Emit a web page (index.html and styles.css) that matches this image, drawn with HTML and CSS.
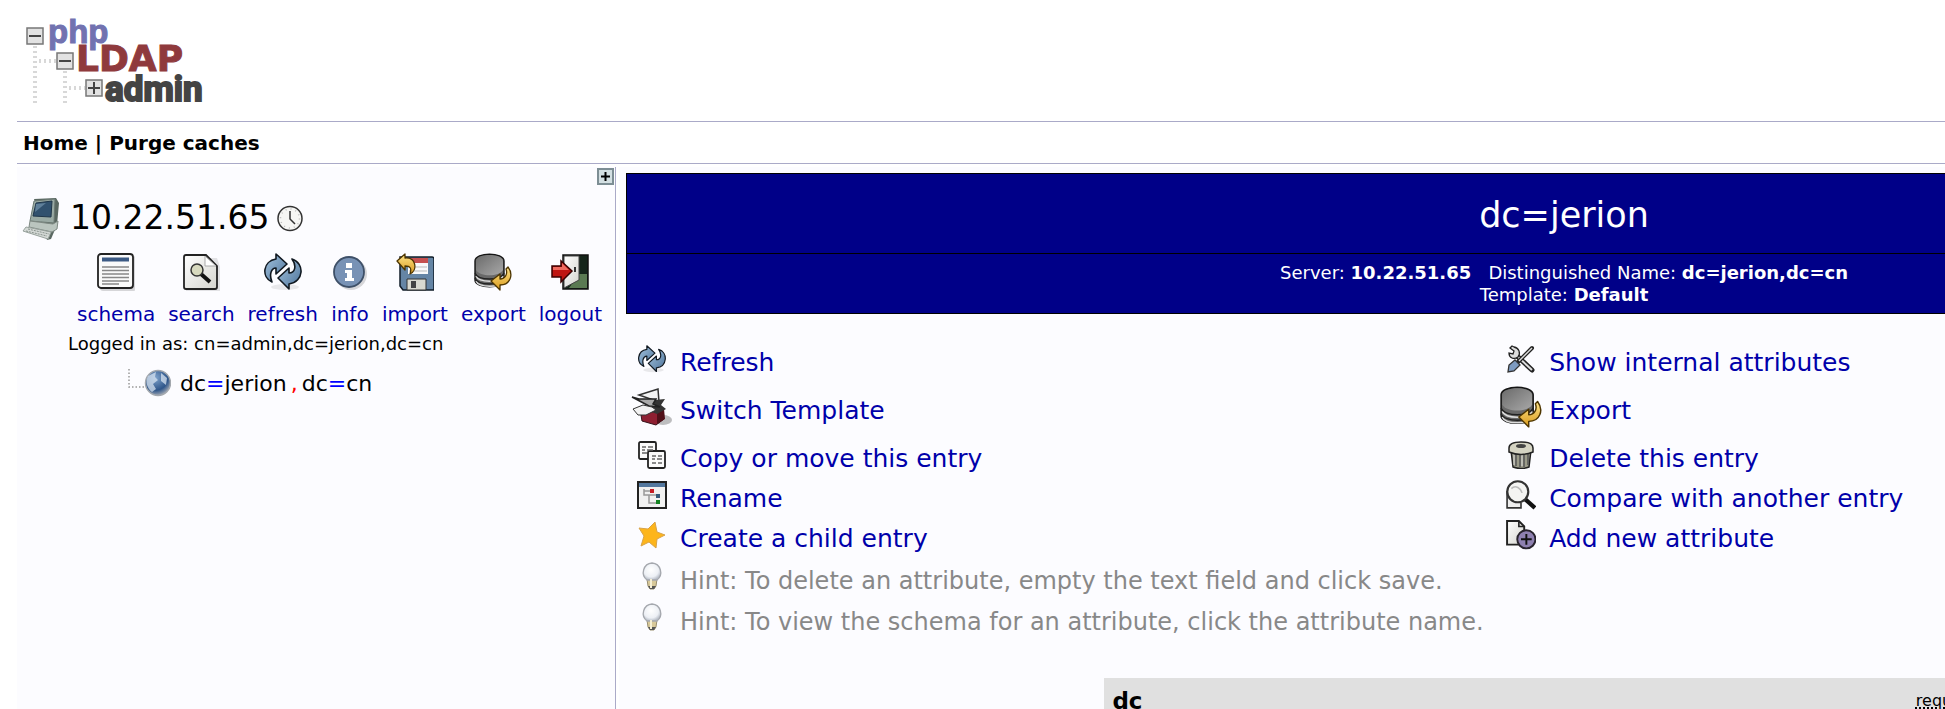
FILE: index.html
```html
<!DOCTYPE html>
<html lang="en">
<head>
<meta charset="utf-8">
<title>phpLDAPadmin</title>
<link rel="stylesheet" href="styles.css">
</head>
<body>
<svg class="defs" width="0" height="0" aria-hidden="true">
  <defs>
    <linearGradient id="gBlue" x1="0" y1="0" x2="1" y2="1"><stop offset="0" stop-color="#a5c4df"/><stop offset="1" stop-color="#4b7299"/></linearGradient>
    <linearGradient id="gGold" x1="0" y1="0" x2="0" y2="1"><stop offset="0" stop-color="#ffe58a"/><stop offset="1" stop-color="#d99a1c"/></linearGradient>
    <linearGradient id="gDisk" x1="0" y1="0" x2="1" y2="1"><stop offset="0" stop-color="#6b6b6b"/><stop offset="1" stop-color="#a8a8a8"/></linearGradient>
    <linearGradient id="gPaper" x1="0" y1="0" x2="1" y2="1"><stop offset="0" stop-color="#ffffff"/><stop offset="1" stop-color="#d4d4ce"/></linearGradient>
    <radialGradient id="gGlobe" cx="0.4" cy="0.3" r="0.7"><stop offset="0" stop-color="#7fa3cc"/><stop offset="0.7" stop-color="#2f568a"/><stop offset="1" stop-color="#9aa3b0"/></radialGradient>
    <radialGradient id="gBulb" cx="0.45" cy="0.4" r="0.6"><stop offset="0" stop-color="#ffffff"/><stop offset="0.7" stop-color="#edf0f5"/><stop offset="1" stop-color="#b9bfc9"/></radialGradient>
    <symbol id="refresh" viewBox="0 0 38 38">
      <ellipse cx="21" cy="34" rx="14" ry="3" fill="#000" opacity=".08"/>
      <path d="M8 29C-3 24-1 8 12 6V1l11 10-11 10v-6c-5 0-7 7-4 14z" fill="url(#gBlue)" stroke="#101820" stroke-width="1.6" stroke-linejoin="round"/>
      <path d="M28 6c13 4 12 23-3 25v5L14 25l11-10v5c6 0 8-7 3-14z" fill="url(#gBlue)" stroke="#101820" stroke-width="1.6" stroke-linejoin="round"/>
    </symbol>
    <symbol id="export" viewBox="0 0 38 38">
      <path d="M1 8C1 -1 30 -1 30 8V27C30 36 1 36 1 27Z" fill="#696969" stroke="#151515" stroke-width="1.4"/>
      <path d="M2 23c3 7 25 7 27 0M2 28c3 7 25 7 27 0" fill="none" stroke="#ddd" stroke-width="1.4"/>
      <path d="M1 20c3 8 26 8 29 0M1 25c3 8 26 8 29 0" fill="none" stroke="#222" stroke-width="1.3"/>
      <path d="M2 8C3 0 28 0 29 8v9c-4 7-23 7-27 0z" fill="url(#gDisk)"/>
      <path d="M34 14c6 8 2 18-8 18v5L17 28l9-7v5c5 0 8-5 6-10z" fill="url(#gGold)" stroke="#4d3500" stroke-width="1.3" stroke-linejoin="round"/>
    </symbol>
    <symbol id="bulb" viewBox="0 0 28 28">
      <path d="M9 17h10l-1 7-2 3h-4l-2-3z" fill="#d8c99a" stroke="#998f70"/>
      <path d="M10 24h8l-2 3h-4z" fill="#555"/>
      <path d="M14 1a9.500 9.500 0 0 0-5 17h10A9.500 9.500 0 0 0 14 1z" fill="url(#gBulb)" stroke="#a5a8ae" stroke-width="1.300"/>
      <path d="M13 17v9" stroke="#f5efd5" stroke-width="2"/>
    </symbol>
  </defs>
</svg>

<div class="page">
  <header class="masthead">
    <svg class="logo" width="186" height="88" viewBox="0 0 186 88" role="img" aria-label="phpLDAPadmin">
      <g stroke="#d8d8d8" stroke-width="4" stroke-dasharray="2 3" fill="none"><path d="M10 29V87M40 54V87"/><path d="M14 44H31M44 71H60"/></g>
      <g fill="#e2e2e2" stroke="#777" stroke-width="1.5"><rect x="2" y="11" width="16" height="16"/><rect x="32" y="36" width="16" height="16"/><rect x="61" y="63" width="16" height="16"/></g>
      <path d="M4 19H16M34 44H46M63 71H75M69 65V77" stroke="#444" stroke-width="2"/>
      <text class="logo-php" x="23" y="26">php</text>
      <text class="logo-ldap" x="51" y="54">LDAP</text>
      <text class="logo-admin" x="80" y="84">admin</text>
    </svg>
  </header>
  <nav class="menu"><a href="#">Home</a> | <a href="#">Purge caches</a></nav>

  <div class="columns">
    <aside class="tree">
      <button class="expand" aria-label="Expand panel"><svg width="17" height="17" viewBox="0 0 17 17"><path d="M1 0V17M0 1H17" stroke="#7d8e94" stroke-width="2"/><path d="M16 0V17M0 16H17" stroke="#7d8e94" stroke-width="2"/><path d="M8.500 4v9M4 8.500h9" stroke="#000" stroke-width="2"/></svg></button>
      <div class="server">
        <svg width="40" height="44" viewBox="0 0 40 44" aria-hidden="true">
          <path d="M12 3L34 2l3 5-2 22-6 14-4 1z" fill="#596761"/>
          <path d="M12 5L33 3 32 27 8 25z" fill="#9aaaa4" stroke="#6a7872"/>
          <path d="M14 7L30 5 29 21 11 20z" fill="#31516e" stroke="#20364a"/>
          <path d="M14 8l10-1-11 9z" fill="#60809a"/>
          <path d="M8 25l23 3 5-3-1 8-5 3-23-5z" fill="#bac5bf" stroke="#7e8983"/>
          <path d="M4 31l25 5-3 7L1 35z" fill="#d4d9d6" stroke="#98a29d"/>
          <path d="M6 33l21 5M4 35l21 5" stroke="#8a948f" stroke-dasharray="2 1"/>
        </svg>
        <h1 class="server-name">10.22.51.65</h1>
        <svg width="26" height="27" viewBox="0 0 26 27" aria-hidden="true"><circle cx="13" cy="13.500" r="12" fill="#f6f6f4" stroke="#333" stroke-width="1.500"/><circle cx="13" cy="13.500" r="9.500" fill="none" stroke="#bbb" stroke-width="1.500" stroke-dasharray="1 4"/><path d="M13 6v8l5 5" fill="none" stroke="#333" stroke-width="1.500"/></svg>
      </div>
      <ul class="tools">
        <li><a href="#"><svg width="38" height="38" viewBox="0 0 38 38"><rect x="3" y="3" width="36" height="35" rx="3" fill="#000" opacity=".15"/><rect x="1" y="1" width="35" height="34" rx="3" fill="#fafafa" stroke="#222" stroke-width="1.800"/><path d="M5 6.500H32" stroke="#3c5a84" stroke-width="4"/><path d="M5 14H32M5 17.500H32M5 21H32M5 24.500H32M5 28H32M5 31H22" stroke="#888" stroke-width="1.400"/></svg>schema</a></li>
        <li><a href="#"><svg width="38" height="38" viewBox="0 0 38 38"><path d="M4 5h31l3 9v24H4z" fill="#000" opacity=".1"/><path d="M4 2h20l11 11v21q0 2-2 2H4q-2 0-2-2V4q0-2 2-2z" fill="url(#gPaper)" stroke="#222" stroke-width="1.800"/><path d="M23 3v10h11z" fill="#fff" stroke="#aaa"/><path d="M19 21l9 8" stroke="#111" stroke-width="4"/><circle cx="15" cy="17" r="6" fill="#d7d9be" stroke="#333" stroke-width="1.500"/></svg>search</a></li>
        <li><a href="#"><svg width="38" height="38"><use href="#refresh"/></svg>refresh</a></li>
        <li><a href="#"><svg width="38" height="38" viewBox="0 0 38 38"><circle cx="20" cy="21" r="16" fill="#000" opacity=".15"/><circle cx="18" cy="19" r="15" fill="#7892b5" stroke="#3e5068" stroke-width="1.800"/><path d="M15 10h6v5h-6zM14 17h7v8h2v3h-9v-3h2v-5h-2z" fill="#fff"/></svg>info</a></li>
        <li><a href="#"><svg width="38" height="38" viewBox="0 0 38 38"><path d="M4 4h32q2 0 2 2v31H7l-3-4z" fill="#6585a5" stroke="#111c28" stroke-width="1.500"/><path d="M12 5h20v16H12z" fill="#fafafa"/><path d="M12 5h20v5H12z" fill="#c65050"/><path d="M13 14H31M13 18H31" stroke="#bbb"/><path d="M11 26h19v11H11z" fill="#d9d9d0" stroke="#333"/><path d="M15 28h5v7h-5z" fill="#444"/><path d="M1 8l8-7v4c11-1 13 12 5 16 2-6 0-8-5-8v4z" fill="url(#gGold)" stroke="#4d3500" stroke-width="1.300" stroke-linejoin="round"/></svg>import</a></li>
        <li><a href="#"><svg width="38" height="38"><use href="#export"/></svg>export</a></li>
        <li><a href="#"><svg width="38" height="38" viewBox="0 0 38 38"><path d="M12 2h25v34H12z" fill="#15251a" stroke="#111" stroke-width="1.500"/><path d="M28 21h8v14H18z" fill="#5a7a52"/><path d="M13 3h15v24l-15 8z" fill="url(#gPaper)" stroke="#444"/><path d="M24 14v5" stroke="#333" stroke-width="2"/><path d="M1 13h9V8l11 10-11 11v-5H1z" fill="#bf1511" stroke="#3b0000" stroke-width="1.500"/><path d="M2 14h9v-4l7 7H2z" fill="#ef6a5f"/></svg>logout</a></li>
      </ul>
      <p class="login">Logged in as: cn=admin,dc=jerion,dc=cn</p>
      <a class="node" href="#">
        <svg width="44" height="30" viewBox="0 0 44 30" aria-hidden="true"><path d="M2 0V18H17" fill="none" stroke="#999" stroke-width="1.500" stroke-dasharray="1.500 2"/><circle cx="31" cy="14" r="12.500" fill="url(#gGlobe)" stroke="#a3a8ae" stroke-width="1.500"/><path d="M21 7l8-4-1 5 3 3-5 4 3 5-4 3c-5-4-7-10-4-16zM34 4l6 5-1 7-5-4z" fill="#d7e3f0" opacity=".75"/></svg>
        <span>dc<b>=</b>jerion<i>,</i>dc<b>=</b>cn</span>
      </a>
    </aside>

    <main class="content">
      <div class="banner">
        <h2 class="title">dc=jerion</h2>
        <p class="subtitle">Server: <strong>10.22.51.65</strong> &nbsp; Distinguished Name: <strong>dc=jerion,dc=cn</strong><br>Template: <strong>Default</strong></p>
      </div>
      <div class="actions">
        <a class="action" href="#"><svg width="28" height="28"><use href="#refresh"/></svg><span>Refresh</span></a>
        <a class="action" href="#"><svg width="28" height="28" viewBox="0 0 28 28"><path d="M10 11L25 25" stroke="#222" stroke-width="5" stroke-linecap="round"/><path d="M10 11L25 25" stroke="#ddd" stroke-width="2"/><path d="M3 3l4 3-1 3-4-1c0 5 5 7 9 4 3-4 1-9-4-10l-2-1z" fill="#ddd" stroke="#222" stroke-width="1.300"/><path d="M11 17L25 3" stroke="#222" stroke-width="4" stroke-linecap="round"/><path d="M12 16L25 3" stroke="#ddd" stroke-width="1.500"/><path d="M8 15l5 5-6 6-6 1 1-7z" fill="#7e9bc0" stroke="#333" stroke-width="1.300"/></svg><span>Show internal attributes</span></a>
        <a class="action tall" href="#"><svg width="42" height="38" viewBox="0 0 42 38"><ellipse cx="32" cy="32" rx="9" ry="5" fill="#000" opacity=".25"/><path d="M10 27l21-6 2 10-8 6-14-4z" fill="#8e1f31" stroke="#35121a"/><path d="M26 25l7-4 1 10-8 5z" fill="#501019"/><path d="M8 7L27 1l1 13z" fill="#f4f4f4" stroke="#333" stroke-width="1.500"/><path d="M24 12l10-1-4 6 5 4-9 5-8-3z" fill="#343434"/><path d="M1 9l7 2h17l-3 5 7 3-11-1z" fill="#aaa" stroke="#222" stroke-width="1.500"/><path d="M2 21l10-4 9 2 4 3-10 5H7z" fill="#f2f2f2" stroke="#333"/></svg><span>Switch Template</span></a>
        <a class="action tall" href="#"><svg width="42" height="42"><use href="#export"/></svg><span>Export</span></a>
        <a class="action" href="#"><svg width="28" height="28" viewBox="0 0 28 28"><g fill="#fafafa" stroke="#222" stroke-width="1.800"><rect x="1" y="1" width="17" height="17" rx="1.500"/><rect x="10" y="10" width="17" height="17" rx="1.500"/></g><path d="M4 6h4m2 0h5M4 9h3m2 0h6M4 12h5M14 15h4m2 0h4M14 18h3m2 0h5M14 22h4m2 0h4" stroke="#666" stroke-width="1.500"/></svg><span>Copy or move this entry</span></a>
        <a class="action" href="#"><svg width="28" height="28" viewBox="0 0 28 28"><path d="M4 9h20l-2 17q-8 3-16 0z" fill="#9b9b89" stroke="#222" stroke-width="1.500"/><path d="M9 13v12M13 13v13M17 13v13M21 13v11" stroke="#555" stroke-width="1.500"/><path d="M7 13v11M15 13v12" stroke="#ddd"/><path d="M2 7q0-6 12-6t12 6v4q-12 5-24 0z" fill="#d4d3c2" stroke="#222" stroke-width="1.500"/><ellipse cx="14" cy="5" rx="5" ry="2" fill="#444"/></svg><span>Delete this entry</span></a>
        <a class="action" href="#"><svg width="30" height="28" viewBox="0 0 30 28"><rect x="1" y="1" width="28" height="26" fill="#f1f1f1" stroke="#222" stroke-width="2"/><path d="M2 4h26" stroke="#54789f" stroke-width="4"/><path d="M7 8v6h13M12 14v8h7M7 10h6" fill="none" stroke="#999" stroke-width="1.500"/><path d="M13 8h4v4h-4z" fill="#c51d25"/><path d="M19 13h4v4h-4z" fill="#34587a"/><path d="M19 19h4v4h-4z" fill="#148322"/></svg><span>Rename</span></a>
        <a class="action" href="#"><svg width="30" height="30" viewBox="0 0 28 28"><path d="M1 10v16h13v-5" fill="#eee" stroke="#333" stroke-width="1.500"/><path d="M18 18l9 8" stroke="#111" stroke-width="4"/><circle cx="11" cy="11" r="9.800" fill="#f4f4f2" stroke="#333" stroke-width="2"/><path d="M5 8c4-4 9 0 10 4" fill="none" stroke="#bbb" stroke-width="1.500"/></svg><span>Compare with another entry</span></a>
        <a class="action" href="#"><svg width="28" height="28" viewBox="0 0 28 28"><path d="M17 1l2 10 8 3-8 4-1 9-7-6-8 4 3-10-5-8 9 1z" fill="#fdb51b" stroke="#d9a348"/></svg><span>Create a child entry</span></a>
        <a class="action" href="#"><svg width="30" height="30" viewBox="0 0 28 28"><path d="M1 1h11l5 5v17H1z" fill="url(#gPaper)" stroke="#222" stroke-width="1.800"/><path d="M12 1v5h5" fill="none" stroke="#222" stroke-width="1.500"/><circle cx="19" cy="18" r="8.500" fill="#8e80b0" stroke="#28232d" stroke-width="1.800"/><path d="M14 18h10M19 13v10" stroke="#111" stroke-width="1.800"/></svg><span>Add new attribute</span></a>
        <p class="action hint"><svg width="28" height="28"><use href="#bulb"/></svg><span>Hint: To delete an attribute, empty the text field and click save.</span></p>
        <p class="action hint"><svg width="28" height="28"><use href="#bulb"/></svg><span>Hint: To view the schema for an attribute, click the attribute name.</span></p>
      </div>
      <section class="attribute">
        <h3 class="attribute-name">dc</h3>
        <span class="notes"><abbr>required</abbr>, <abbr>rdn</abbr></span>
      </section>
    </main>
  </div>
</div>
</body>
</html>
```
FILE: styles.css
```css
* { box-sizing: border-box; }
html { height: 100%; overflow: hidden; background: #fff; }
body { margin: 0; min-height: 100%; font-family: Verdana, "DejaVu Sans", sans-serif; font-size: 20px; color: #000; }
h1, h2, h3, p, ul { margin: 0; padding: 0; font-weight: normal; }
a { color: #0000aa; text-decoration: none; }
svg { display: block; flex: none; }
.defs { position: absolute; }

.page { display: flex; flex-direction: column; width: 129vw; min-height: 100vh; padding-left: 17px; }
.masthead { padding: 17px 8px 16px; }
.logo text { font-weight: bold; }
.logo-php { font-family: "Liberation Sans", sans-serif; font-size: 33px; fill: #7272b0; stroke: #7272b0; }
.logo-ldap { font-family: "DejaVu Sans", sans-serif; font-size: 36px; fill: #8f3a3d; stroke: #8f3a3d; }
.logo-admin { font-family: Roboto, "Liberation Sans", sans-serif; font-size: 35px; fill: #444; stroke: #444; stroke-width: 2px; }

.menu { border: 1px solid #aaaac8; border-width: 1px 0; padding: 2px 6px 0; line-height: 39px; font-weight: bold; }
.menu a { color: #000; }

.columns { display: flex; flex: 1; margin-top: 3px; }
.tree { flex: none; width: 599px; background: #fcfcff; border-right: 1px solid #aaaac8; }
.expand { display: block; margin: 1px 1px 0 auto; padding: 0; border: 0; background: #d3dfe2; }
.server { display: flex; align-items: center; gap: 8px; padding: 11px 5px 0; }
.server-name { font-size: 33px; line-height: 44px; }
.tools { display: flex; gap: 13px; padding: 13px 0 0 60px; list-style: none; }
.tools a { display: flex; flex-direction: column; align-items: center; gap: 11px; line-height: 24px; }
.login { padding: 6px 0 0 51px; font-size: 18px; line-height: 24px; }
.node { display: flex; align-items: center; gap: 9px; padding: 13px 0 0 110px; font-size: 22px; line-height: 30px; color: #000; }
.node b { font-weight: normal; color: #00f; }
.node i { padding: 0 4px; font-style: normal; color: #f00; }

.content { flex: 1; margin-left: 3px; padding: 6px 7px 0; background: #fcfcff; }
.banner { background: #000088; border: 1px solid #000; color: #fff; text-align: center; }
.title { padding-top: 4px; font-size: 35px; line-height: 75px; border-bottom: 1px solid #000; }
.subtitle { padding: 8px 0 7px; font-size: 18px; line-height: 22px; }

.actions { display: grid; grid-template-columns: 871fr 1005fr; padding: 25px 0 0 4px; font-size: 25px; }
.action { display: grid; grid-template-columns: 44px 1fr; column-gap: 6px; align-items: center; justify-items: center; min-height: 40px; line-height: 28px; }
.action span { justify-self: start; padding-top: 8px; }
.tall { min-height: 56px; }
.hint { grid-column: 1 / -1; min-height: 41px; font-size: 24px; color: #888; }
.hint span { padding-top: 10px; }

.attribute { display: flex; justify-content: space-between; align-items: center; width: 49%; margin: 41px auto 0; padding: 0 4px 0 8px; line-height: 46px; background: #e0e0e0; }
.attribute-name { font-size: 23px; font-weight: bold; }
.notes { font-size: 16px; }
.notes abbr { text-decoration: underline dotted 2px; }
```
